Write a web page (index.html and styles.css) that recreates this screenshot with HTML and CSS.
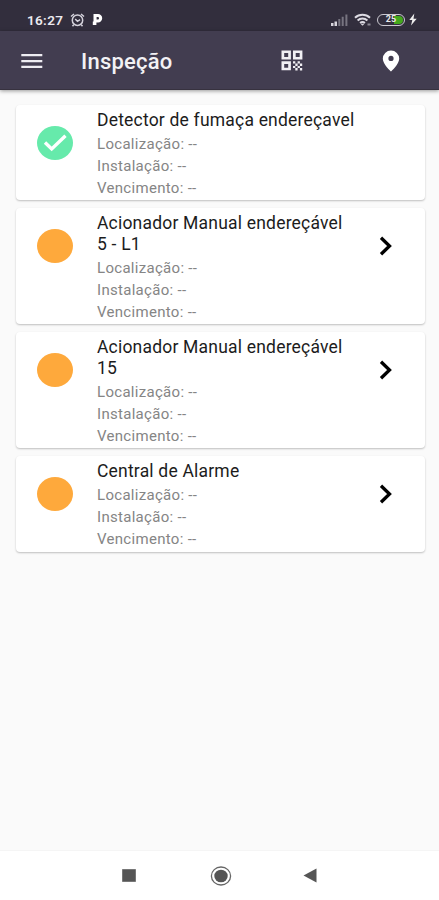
FILE: index.html
```html
<!DOCTYPE html>
<html lang="pt-BR">
<head>
<meta charset="utf-8">
<title>Inspeção</title>
<link rel="stylesheet" href="styles.css">
</head>
<body>
<div class="statusbar">
  <span class="time">16:27</span>
  <svg class="alarm" width="16" height="16" viewBox="0 0 16 16" fill="none" stroke="#d5d3dc" stroke-width="1.5"><circle cx="7.500" cy="8.200" r="5.200"/><path d="M1 4.500 4 2M14 4.500 11 2M5.200 7 7.500 9.300l2.600-1.600M3.800 12.600 2.500 14.300M11.200 12.600 12.500 14.300"/></svg>
  <svg class="parking" width="11" height="13" viewBox="0 0 11 13"><path fill="#fff" fill-rule="evenodd" d="M1.500 1H6a4.200 4.200 0 0 1 0 8.400H4.400V12H.8V8.500h.7zM4.600 4v2.500h1.200a1.250 1.250 0 0 0 0-2.500z"/></svg>
  <span class="spacer"></span>
  <svg class="signal" width="17" height="12" viewBox="0 0 17 12"><path fill="#d8d6de" d="M0 9h2.500v3H0zM3.500 7.500H6V12H3.500z"/><path fill="#777480" d="M7.300 5h2v7h-2zM10.700 2.700h2V12h-2zM14.400.5h2V12h-2z"/></svg>
  <svg class="wifi" width="18" height="14" viewBox="0 0 18 14" fill="none" stroke="#dddbe3" stroke-width="2"><path d="M1 4.800a11 11 0 0 1 15 0M3.600 7.500a7.200 7.200 0 0 1 9.800 0M6.100 10a3.600 3.600 0 0 1 4.800 0"/><path d="m7.200 10.700 1.300 1.600 1.300-1.600" fill="#dddbe3" stroke-width="1"/><path d="M13.500 11.500h3" stroke="#8d8a96"/></svg>
  <span class="battery"><span class="charge"></span><span class="level">25</span></span>
  <svg class="bolt" width="8" height="13" viewBox="0 0 8 13"><path fill="#eee" d="M5.300.5.300 7h3L2 12.500 7.700 5.700H4.500z"/></svg>
</div>
<header class="appbar">
  <svg class="menu" width="22" height="16" viewBox="0 0 22 16"><path fill="#eeedf2" d="M.3 1h21v2.200H.3zM.3 7h21v2.200H.3zM.3 12.800h21V15H.3z"/></svg>
  <h1>Inspeção</h1>
  <svg class="qr" width="22" height="21" viewBox="0 0 22 21"><path fill="#f1f0f4" fill-rule="evenodd" d="M.5.5h9.400v9H.5zm2.700 2.600v3.800h4V3.100zM12 .5h9.400v9H12zm2.700 2.600v3.800h4V3.100zM.5 11.300h9.400v9H.5zm2.700 2.600v3.800h4v-3.800z"/><path fill="#f1f0f4" d="M12 11.300h2.300v2.300H12zM16.600 11.300h2.300v2.300h-2.300zM14.300 13.600h2.300v2.300h-2.300zM18.900 13.600h2.300v2.300h-2.300zM12 15.900h2.300v2.200H12zM16.600 15.900h2.300v2.200h-2.300zM14.300 18.100h2.300v2.300h-2.300zM18.900 18.100h2.300v2.300h-2.300z"/></svg>
  <svg class="pin" width="18" height="22" viewBox="0 0 18 22"><path fill="#fff" fill-rule="evenodd" d="M9 .5a8.200 8.200 0 0 0-8.200 8.200C.8 14 9 21.500 9 21.500s8.200-7.500 8.200-12.800A8.200 8.200 0 0 0 9 .5zm0 5.300a2.600 2.600 0 1 1 0 5.200 2.600 2.600 0 0 1 0-5.200z"/></svg>
</header>
<main>
  <article class="card first">
    <span class="status done"><svg width="36" height="34" viewBox="0 0 36 34"><path d="m8 16.500 6.700 6.400L28.500 9.800" fill="none" stroke="#fff" stroke-width="3.400"/></svg></span>
    <div class="info"><h2>Detector de fumaça endereçavel</h2><p>Localização: --</p><p>Instalação: --</p><p>Vencimento: --</p></div>
  </article>
  <article class="card tall">
    <span class="status"></span>
    <div class="info"><h2>Acionador Manual endereçável<br>5 - L1</h2><p>Localização: --</p><p>Instalação: --</p><p>Vencimento: --</p></div>
    <svg class="chevron" width="14" height="20" viewBox="0 0 14 20"><path d="m2 1.800 8.500 8.200L2 18.200" fill="none" stroke="#000" stroke-width="3.300"/></svg>
  </article>
  <article class="card tall">
    <span class="status"></span>
    <div class="info"><h2>Acionador Manual endereçável<br>15</h2><p>Localização: --</p><p>Instalação: --</p><p>Vencimento: --</p></div>
    <svg class="chevron" width="14" height="20" viewBox="0 0 14 20"><path d="m2 1.800 8.500 8.200L2 18.200" fill="none" stroke="#000" stroke-width="3.300"/></svg>
  </article>
  <article class="card">
    <span class="status"></span>
    <div class="info"><h2>Central de Alarme</h2><p>Localização: --</p><p>Instalação: --</p><p>Vencimento: --</p></div>
    <svg class="chevron" width="14" height="20" viewBox="0 0 14 20"><path d="m2 1.800 8.500 8.200L2 18.200" fill="none" stroke="#000" stroke-width="3.300"/></svg>
  </article>
</main>
<nav class="navbar">
  <svg width="14" height="13" viewBox="0 0 14 13"><path fill="#555" stroke="#777" d="M.5.5h13v12H.5z"/></svg>
  <svg class="home" width="22" height="20" viewBox="0 0 22 20"><ellipse cx="11" cy="10" rx="9.600" ry="9" fill="none" stroke="#666" stroke-width="1.300"/><ellipse cx="11" cy="10" rx="6.700" ry="6.300" fill="#555"/></svg>
  <svg class="back" width="14" height="15" viewBox="0 0 14 15"><path fill="#555" d="M13.500.5v14L.5 7.500z"/></svg>
</nav>
</body>
</html>
```
FILE: styles.css
```css
* { box-sizing: border-box; }
body { margin: 0; height: 900px; display: flex; flex-direction: column; background: #fafafa; font-family: Roboto, sans-serif; overflow: hidden; }
svg { display: block; flex: none; }
h1, h2, p { margin: 0; font-weight: 400; white-space: nowrap; }
.statusbar { height: 31px; flex: none; background: #322e3d; display: flex; align-items: center; padding: 8px 22px 0 27px; color: #eceaf0; }
.time { font-size: 13.500px; font-weight: 600; letter-spacing: .35px; width: 43px; }
.parking { margin-left: 6px; }
.spacer { flex: 1; }
.wifi { margin-left: 6px; }
.battery { position: relative; width: 28px; height: 12px; margin-left: 5px; border: 1.500px solid #cccad2; border-radius: 6px; color: #e9e9e9; font-size: 9px; font-weight: 700; line-height: 9px; text-align: center; overflow: hidden; }
.charge { position: absolute; right: 1px; top: 1px; width: 9px; height: 8px; background: #43a81c; border-radius: 0 4px 4px 0; }
.level { position: relative; }
.bolt { margin-left: 4px; }
.appbar { position: relative; height: 59px; flex: none; background: #423d50; border-bottom: 1px solid #37323f; box-shadow: 0 1px 4px rgba(0,0,0,.4); display: flex; align-items: center; padding-left: 21px; }
h1 { width: 200px; margin-left: 38px; font-size: 22px; font-weight: 500; letter-spacing: .2px; color: #f3f2f5; line-height: 30px; margin-top: 4px; }
.menu { margin-top: 2px; }
.qr, .pin { margin-top: 1px; }
.pin { margin-left: 79px; }
main { flex: 1; padding: 15px 14px 0 16px; display: flex; flex-direction: column; gap: 8px; }
.card { height: 96px; flex: none; background: #fff; border-radius: 4px; box-shadow: 0 1px 2px rgba(0,0,0,.24); display: flex; padding-left: 21px; }
.first { height: 95px; }
.card.tall { height: 116px; }
.status { width: 36px; height: 34px; margin-top: 20.500px; flex: none; border-radius: 50%; background: #fea93c; }
.status.done { background: #66eaab; }
.info { width: 265px; margin-left: 24px; padding-top: 5px; }
h2 { font-size: 17.500px; line-height: 20.500px; letter-spacing: .2px; color: #1c1c1c; padding-bottom: 2.500px; }
p { font-size: 15px; line-height: 22.200px; letter-spacing: .3px; color: #858585; }
.chevron { margin: 28px 0 0 17px; }
.navbar { height: 50px; flex: none; background: #fff; display: flex; align-items: center; padding-left: 122px; border-top: 1px solid #f5f5f5; }
.home { margin-left: 74px; }
.back { margin-left: 71px; }
```
